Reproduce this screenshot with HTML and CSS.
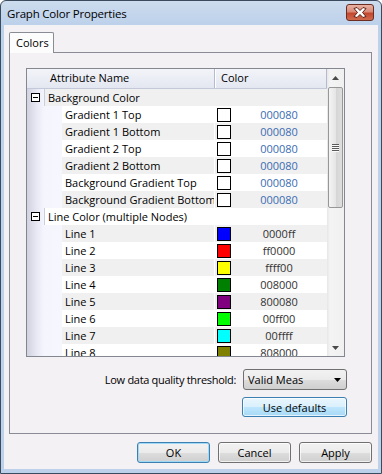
FILE: index.html
```html
<!DOCTYPE html>
<html>
<head>
<meta charset="utf-8">
<link rel="stylesheet" href="styles.css">
</head>
<body>
<div class="window">
  <div class="titlebar">
    <span class="title">Graph Color Properties</span>
    <div class="close">
      <svg width="14" height="11" viewBox="0 0 14 11"><path d="M1 1.5 L4 0.5 L7 3.5 L10 0.5 L13 1.5 L9.5 5.5 L13 9.5 L10 10.5 L7 7.5 L4 10.5 L1 9.5 L4.5 5.5 Z" fill="#fff" stroke="#5a1e14" stroke-width="1" stroke-linejoin="round"/></svg>
    </div>
  </div>
  <div class="client">
    <div class="tabs"><div class="tab">Colors</div></div>
    <div class="panel">
      <div class="grid">
        <div class="grid-main">
          <div class="header">
            <div class="h-name">Attribute Name</div>
            <div class="h-color">Color</div>
          </div>
          <div class="rows">
            <div class="row cat grey"><div class="expander"><span class="box"></span></div><div class="cat-name">Background Color</div></div>
            <div class="row"><div class="gutter"></div><div class="name">Gradient 1 Top</div><div class="cell"><span class="swatch sw-white"></span><span class="hex navy">000080</span></div></div>
            <div class="row grey"><div class="gutter"></div><div class="name">Gradient 1 Bottom</div><div class="cell"><span class="swatch sw-white"></span><span class="hex navy">000080</span></div></div>
            <div class="row"><div class="gutter"></div><div class="name">Gradient 2 Top</div><div class="cell"><span class="swatch sw-white"></span><span class="hex navy">000080</span></div></div>
            <div class="row grey"><div class="gutter"></div><div class="name">Gradient 2 Bottom</div><div class="cell"><span class="swatch sw-white"></span><span class="hex navy">000080</span></div></div>
            <div class="row"><div class="gutter"></div><div class="name">Background Gradient Top</div><div class="cell"><span class="swatch sw-white"></span><span class="hex navy">000080</span></div></div>
            <div class="row grey"><div class="gutter"></div><div class="name">Background Gradient Bottom</div><div class="cell"><span class="swatch sw-white"></span><span class="hex navy">000080</span></div></div>
            <div class="row cat"><div class="expander"><span class="box"></span></div><div class="cat-name">Line Color (multiple Nodes)</div></div>
            <div class="row grey"><div class="gutter"></div><div class="name">Line 1</div><div class="cell"><span class="swatch sw-blue"></span><span class="hex">0000ff</span></div></div>
            <div class="row"><div class="gutter"></div><div class="name">Line 2</div><div class="cell"><span class="swatch sw-red"></span><span class="hex">ff0000</span></div></div>
            <div class="row grey"><div class="gutter"></div><div class="name">Line 3</div><div class="cell"><span class="swatch sw-yellow"></span><span class="hex">ffff00</span></div></div>
            <div class="row"><div class="gutter"></div><div class="name">Line 4</div><div class="cell"><span class="swatch sw-green"></span><span class="hex">008000</span></div></div>
            <div class="row grey"><div class="gutter"></div><div class="name">Line 5</div><div class="cell"><span class="swatch sw-purple"></span><span class="hex">800080</span></div></div>
            <div class="row"><div class="gutter"></div><div class="name">Line 6</div><div class="cell"><span class="swatch sw-lime"></span><span class="hex">00ff00</span></div></div>
            <div class="row grey"><div class="gutter"></div><div class="name">Line 7</div><div class="cell"><span class="swatch sw-cyan"></span><span class="hex">00ffff</span></div></div>
            <div class="row"><div class="gutter"></div><div class="name">Line 8</div><div class="cell"><span class="swatch sw-olive"></span><span class="hex">808000</span></div></div>
          </div>
        </div>
        <div class="scrollbar">
          <div class="sb-btn"><svg width="7" height="4" viewBox="0 0 7 4"><path d="M3.5 0 L7 4 L0 4 Z" fill="#4a4a4a"/></svg></div>
          <div class="thumb"><span class="grip"></span><span class="grip"></span><span class="grip"></span><span class="grip"></span></div>
          <div class="sb-space"></div>
          <div class="sb-btn"><svg width="7" height="4" viewBox="0 0 7 4"><path d="M0 0 L7 0 L3.5 4 Z" fill="#4a4a4a"/></svg></div>
        </div>
      </div>
      <div class="threshold">
        <span class="label">Low data quality threshold:</span>
        <div class="combo"><span>Valid Meas</span><svg width="7" height="4" viewBox="0 0 7 4"><path d="M0 0 L7 0 L3.5 4 Z" fill="#000"/></svg></div>
      </div>
      <div class="btn btn-blue defaults">Use defaults</div>
    </div>
    <div class="footer">
      <div class="btn btn-default">OK</div>
      <div class="btn">Cancel</div>
      <div class="btn">Apply</div>
    </div>
  </div>
</div>
</body>
</html>
```

FILE: styles.css
```css
* { box-sizing: border-box; }
html, body { margin: 0; padding: 0; }
body {
  width: 382px; height: 474px; overflow: hidden;
  font-family: "Open Sans", "Liberation Sans", sans-serif;
  font-size: 11px; color: #000; background: #fff;
}
.window {
  width: 382px; height: 474px;
  border: 1px solid #3b4b5e;
  border-radius: 6px 6px 0 0;
  background: linear-gradient(#cddcee, #bcd1ea 24px, #bdd2ea);
  display: flex; flex-direction: column;
  padding: 0 3px 4px 3px;
}
.titlebar {
  height: 24px; flex: none;
  display: flex; align-items: center; justify-content: space-between;
  padding-left: 3px; padding-right: 4px;
}
.title { font-size: 11.5px; letter-spacing: -0.2px; color: #000; }
.close {
  width: 28px; height: 17px; margin-top: -1px;
  border: 1px solid #6b2c22; border-radius: 3px;
  background: linear-gradient(#eab2a4, #d88a77 45%, #c4472f 55%, #d06a4c);
  display: flex; align-items: center; justify-content: center;
}
.client {
  flex: 1; background: #f4f1f4;
  display: flex; flex-direction: column;
  padding: 7px 6px 0 5px;
}
.tabs { height: 20px; flex: none; display: flex; position: relative; z-index: 1; }
.tab {
  width: 45px; height: 21px;
  border: 1px solid #898c95; border-bottom: none;
  border-radius: 2px 2px 0 0;
  background: #fcfcfc;
  padding-left: 6px; line-height: 19px;
}
.panel {
  height: 382px; flex: none;
  border: 1px solid #898c95;
  background: #f4f1f4;
  padding: 15px 24px 0 16px;
  display: flex; flex-direction: column;
}
.grid {
  width: 319px; height: 289px; flex: none;
  border: 1px solid #828790;
  background: #fff;
  display: flex;
}
.grid-main { width: 300px; display: flex; flex-direction: column; overflow: hidden; }
.header {
  height: 20px; flex: none; display: flex;
  background: linear-gradient(#f3f4f9, #e3e7f1);
  border-bottom: 1px solid #c3c9d9;
}
.h-name { width: 188px; padding-left: 23px; line-height: 18px; border-right: 1px solid #b4bbcf; }
.h-color { flex: 1; padding-left: 5px; line-height: 18px; border-right: 1px solid #b4bbcf; border-left: 1px solid #fff; }
.rows { flex: 1; overflow: hidden; }
.row { height: 17px; display: flex; background: #fff; white-space: nowrap; }
.row.grey { background: #f0f0f0; }
.gutter, .expander {
  background: linear-gradient(to right, #d2d2e0, #e8e9f4 10px, #f4f5fd 17px, #f6f7fe);
  flex: none;
}
.gutter { width: 35px; }
.expander { width: 17px; display: flex; align-items: center; justify-content: center; }
.box {
  width: 9px; height: 9px; border: 1px solid #000; background: #fff; position: relative;
}
.box::after {
  content: ""; position: absolute; left: 1px; top: 3px; width: 5px; height: 1px; background: #000;
}
.cat-name { flex: 1; padding-left: 3px; line-height: 17px; border-left: 1px solid #c7d0e3; }
.name { width: 152px; padding-left: 3px; line-height: 17px; overflow: hidden; }
.cell { flex: 1; display: flex; align-items: center; border-left: 1px solid #fff; }
.swatch { width: 14px; height: 14px; border: 1px solid #000; margin-left: 2px; flex: none; }
.hex { flex: 1; text-align: center; line-height: 17px; color: #333; }
.hex.navy { color: #3b6db3; }
.sw-white { background: #fff; }
.sw-blue { background: #0000ff; }
.sw-red { background: #ff0000; }
.sw-yellow { background: #ffff00; }
.sw-green { background: #008000; }
.sw-purple { background: #800080; }
.sw-lime { background: #00ff00; }
.sw-cyan { background: #00ffff; }
.sw-olive { background: #808000; }
.scrollbar {
  width: 17px; flex: none;
  background: linear-gradient(to right, #e6e6e6, #f4f4f4 3px, #f0f0f0);
  display: flex; flex-direction: column;
}
.sb-btn { height: 17px; flex: none; display: flex; align-items: center; justify-content: center; }
.thumb {
  height: 121px; flex: none; margin: 1px 1px 0 1px;
  border: 1px solid #979797; border-radius: 2px;
  background: linear-gradient(to right, #f4f4f4, #e6e6e6 50%, #d5d5d5 51%, #dedede);
  display: flex; flex-direction: column; align-items: center; justify-content: center; gap: 1px;
}
.grip { width: 7px; height: 1px; background: #5a5a5a; box-shadow: 0 1px 0 #fafafa; }
.sb-space { flex: 1; }
.threshold {
  margin-top: 12px; display: flex; justify-content: flex-end; align-items: center;
}
.label { margin-right: 7px; letter-spacing: -0.3px; }
.combo {
  width: 104px; height: 21px;
  border: 1px solid #707070; border-radius: 3px;
  background: linear-gradient(#f2f2f2, #ebebeb 50%, #dddddd 51%, #cfcfcf);
  display: flex; align-items: center; justify-content: space-between;
  padding: 0 5px 0 4px;
}
.btn {
  width: 73px; height: 21px;
  border: 1px solid #707070; border-radius: 3px;
  background: linear-gradient(#f2f2f2, #ebebeb 50%, #dddddd 51%, #cfcfcf);
  display: flex; align-items: center; justify-content: center;
  box-shadow: inset 0 0 0 1px rgba(255,255,255,0.7);
}
.btn-blue {
  border-color: #3c7fb1;
  background: linear-gradient(#eaf6fd, #d9f0fc 50%, #bee6fd 51%, #a7d9f5);
}
.btn-default {
  border-color: #3c7fb1;
  box-shadow: inset 0 0 0 1px #9fd9f6;
}
.defaults { width: 105px; height: 20px; align-self: flex-end; margin-top: 7px; }
.footer {
  margin-top: 8px; display: flex; justify-content: flex-end; gap: 8px;
}
```
